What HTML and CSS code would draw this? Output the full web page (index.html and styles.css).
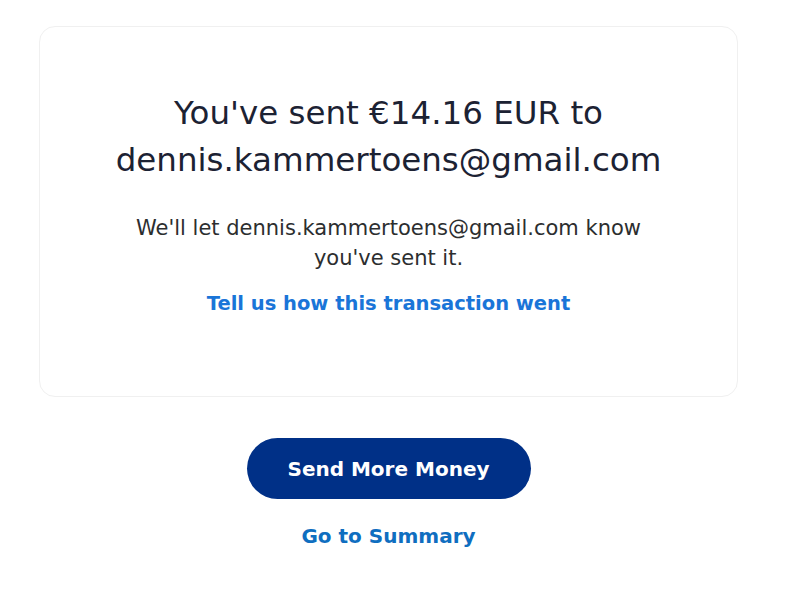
FILE: index.html
```html
<!DOCTYPE html>
<html>
<head>
<meta charset="utf-8">
<link rel="stylesheet" href="styles.css">
</head>
<body>
<main class="page">
  <section class="card">
    <h1 class="title">You've sent €14.16 EUR to<br>dennis.kammertoens@gmail.com</h1>
    <p class="note">We'll let dennis.kammertoens@gmail.com know<br>you've sent it.</p>
    <a class="feedback" href="#">Tell us how this transaction went</a>
  </section>
  <div class="actions">
    <button class="primary">Send More Money</button>
    <a class="summary" href="#">Go to Summary</a>
  </div>
</main>
</body>
</html>
```
FILE: styles.css
```css
html, body {
  margin: 0;
  padding: 0;
  background: #ffffff;
}
body {
  font-family: "DejaVu Sans", sans-serif;
}
.page {
  width: 800px;
  height: 590px;
  padding-top: 26px;
  box-sizing: border-box;
}
.card {
  margin-left: 39px;
  width: 699px;
  height: 371px;
  box-sizing: border-box;
  border: 1px solid #f0f0f0;
  border-radius: 16px;
  display: flex;
  flex-direction: column;
  align-items: center;
  padding-top: 63px;
}
.title {
  margin: 0;
  font-size: 32.5px;
  font-weight: 400;
  line-height: 47px;
  color: #1c2233;
  text-align: center;
}
.note {
  margin: 29px 0 0;
  font-size: 21px;
  line-height: 30px;
  color: #2c2e2f;
  text-align: center;
}
.feedback {
  margin-top: 16px;
  font-size: 19.5px;
  font-weight: 700;
  color: #1a75d8;
  text-decoration: none;
  line-height: 30px;
}
.actions {
  margin-left: 39px;
  width: 699px;
  display: flex;
  flex-direction: column;
  align-items: center;
  margin-top: 41px;
}
.primary {
  width: 284px;
  height: 61px;
  border: none;
  border-radius: 31px;
  background: #003087;
  color: #ffffff;
  font-family: "DejaVu Sans", sans-serif;
  font-size: 20px;
  font-weight: 700;
}
.summary {
  margin-top: 22px;
  font-size: 20px;
  font-weight: 700;
  color: #0f6ec0;
  text-decoration: none;
  line-height: 30px;
}
```
